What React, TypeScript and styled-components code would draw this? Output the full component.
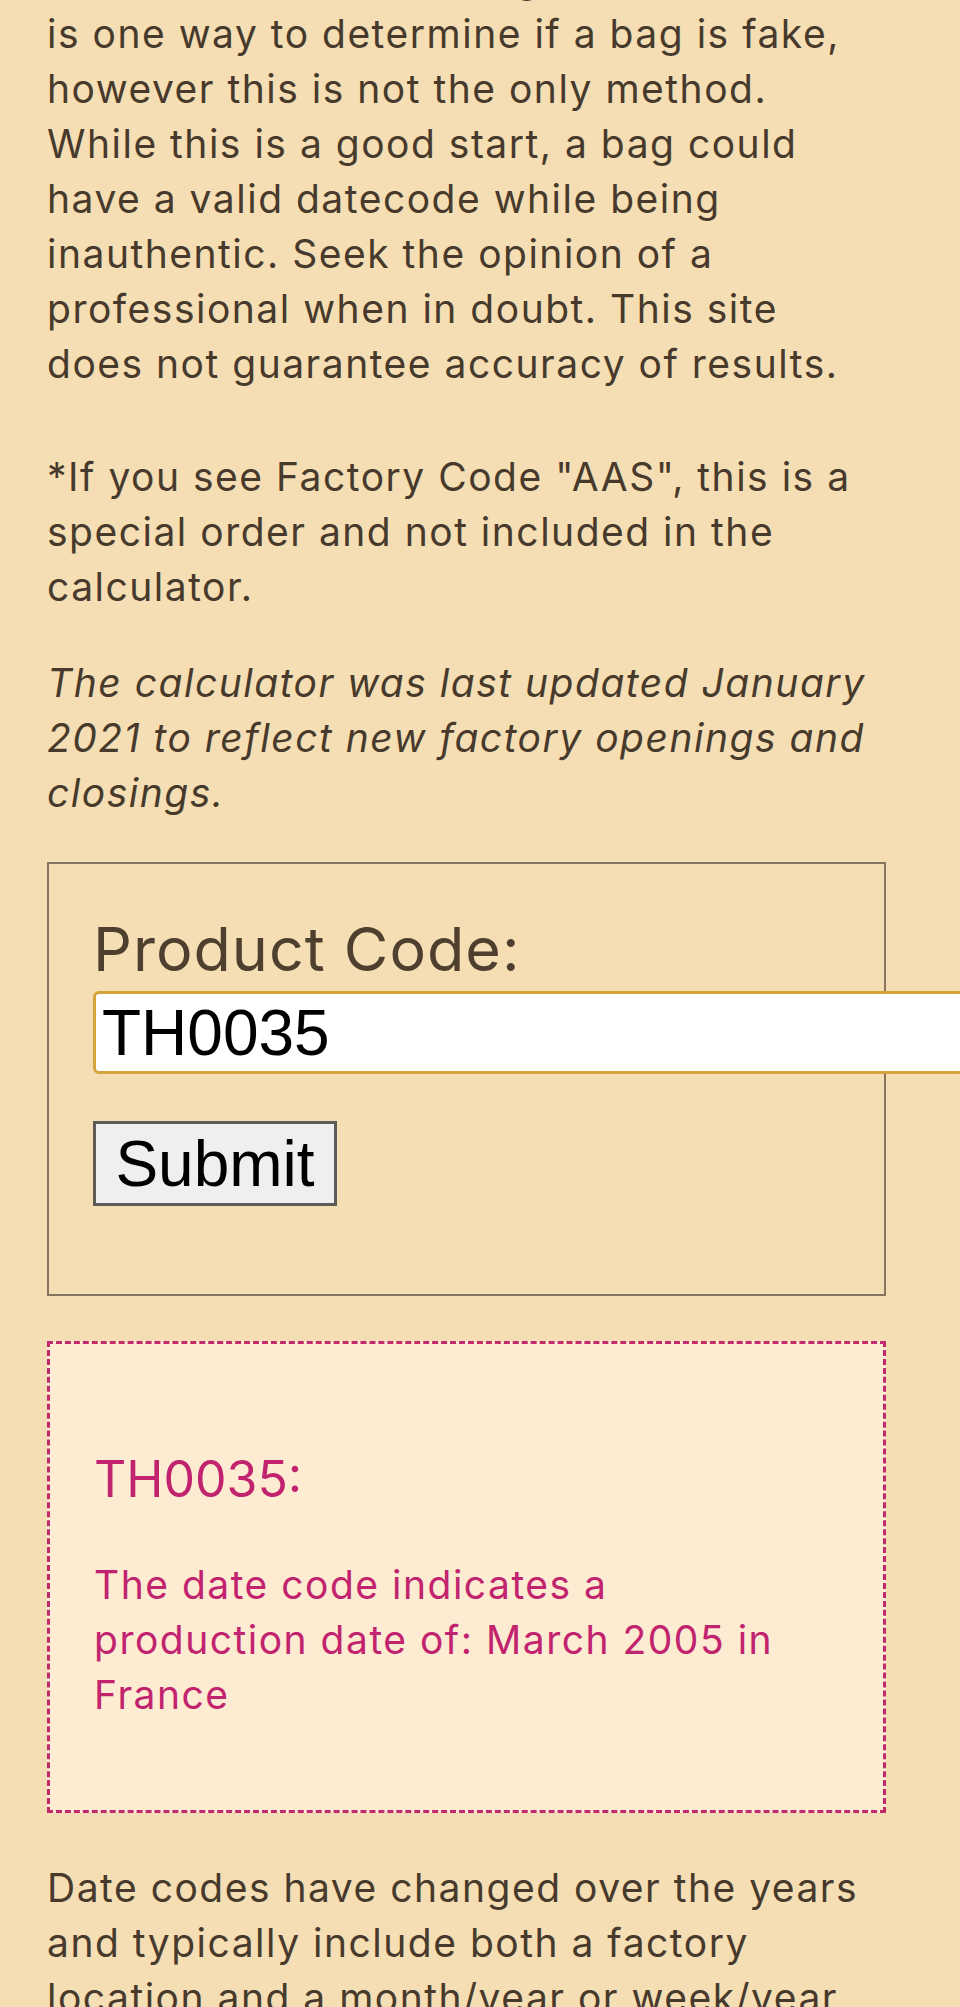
import React, { useState } from 'react';
import styled, { createGlobalStyle } from 'styled-components';

const GlobalStyle = createGlobalStyle`
    html, body {
        margin: 0;
        padding: 0;
        overflow: hidden;
        background: #f5deb3;
    }
`;

// the copy is broken where the original page wraps it
const Lines: React.FC<{ lines: string[] }> = ({ lines }) => (
    <>
        {lines.map((line, i) => (
            <React.Fragment key={i}>
                {i > 0 && <br />}
                {line}
            </React.Fragment>
        ))}
    </>
);

const Page: React.FC = () => {
    const [code, setCode] = useState('TH0035');

    return (
        <>
            <GlobalStyle />
            <Content>
                <Paragraph $gap={58}>
                    <Lines
                        lines={[
                            'Remember that checking the date code',
                            'is one way to determine if a bag is fake,',
                            'however this is not the only method.',
                            'While this is a good start, a bag could',
                            'have a valid datecode while being',
                            'inauthentic. Seek the opinion of a',
                            'professional when in doubt. This site',
                            'does not guarantee accuracy of results.',
                        ]}
                    />
                </Paragraph>
                <Paragraph $gap={41}>
                    <Lines
                        lines={[
                            '*If you see Factory Code "AAS", this is a',
                            'special order and not included in the',
                            'calculator.',
                        ]}
                    />
                </Paragraph>
                <Paragraph $gap={42} $italic>
                    <Lines
                        lines={[
                            'The calculator was last updated January',
                            '2021 to reflect new factory openings and',
                            'closings.',
                        ]}
                    />
                </Paragraph>

                <FormBox onSubmit={(e) => e.preventDefault()}>
                    <Label htmlFor='product-code'>Product Code:</Label>
                    <CodeInput id='product-code' value={code} onChange={(e) => setCode(e.target.value)} />
                    <SubmitButton type='submit'>Submit</SubmitButton>
                </FormBox>

                <ResultBox>
                    <ResultTitle>TH0035:</ResultTitle>
                    <ResultText>
                        <Lines lines={['The date code indicates a', 'production date of: March 2005 in', 'France']} />
                    </ResultText>
                </ResultBox>

                <Paragraph $gap={0}>
                    <Lines
                        lines={[
                            'Date codes have changed over the years',
                            'and typically include both a factory',
                            'location and a month/year or week/year',
                            'of production.',
                        ]}
                    />
                </Paragraph>
            </Content>
        </>
    );
};

const Content = styled.main`
    margin-top: -49px;
    padding: 0 74px 0 47px;
    font-family: 'Inter', 'Noto Sans', sans-serif;
    font-size: 39px;
    line-height: 55px;
    letter-spacing: 1.5px;
    color: #473a2c;
`;

const Paragraph = styled.p<{ $gap: number; $italic?: boolean }>`
    margin: 0 0 ${(props) => props.$gap}px;
    font-style: ${(props) => (props.$italic ? 'italic' : 'normal')};
    white-space: nowrap;
`;

const FormBox = styled.form`
    display: flex;
    flex-direction: column;
    align-items: flex-start;
    border: 2px solid #85755f;
    padding: 49px 44px 88px;
    margin-bottom: 45px;
`;

const Label = styled.label`
    font-size: 61px;
    line-height: 72px;
    letter-spacing: 1px;
    color: #4e3f2f;
`;

const CodeInput = styled.input`
    box-sizing: border-box;
    width: 900px;
    height: 83px;
    margin-top: 6px;
    padding: 2px 6px;
    border: 3px solid #d6a43c;
    border-radius: 6px;
    background: #fff;
    color: #000;
    font-family: 'Liberation Sans', Arial, sans-serif;
    font-size: 64px;
    letter-spacing: 0;
    outline: none;
`;

const SubmitButton = styled.button`
    box-sizing: border-box;
    height: 85px;
    width: 244px;
    margin-top: 47px;
    padding: 0;
    border: 3px solid #5e5a55;
    border-radius: 0;
    background: #efefef;
    color: #000;
    font-family: 'Liberation Sans', Arial, sans-serif;
    font-size: 64px;
    letter-spacing: 0;
    line-height: 1;
`;

const ResultBox = styled.section`
    border: 3px dashed #c12a6c;
    background: #fdebd2;
    padding: 105px 44px 88px;
    margin-bottom: 47px;
    color: #c2236f;
`;

const ResultTitle = styled.h3`
    margin: 0 0 48px;
    font-size: 50px;
    line-height: 60px;
    font-weight: 400;
    letter-spacing: 0;
`;

const ResultText = styled.p`
    margin: 0;
`;

export default Page;
